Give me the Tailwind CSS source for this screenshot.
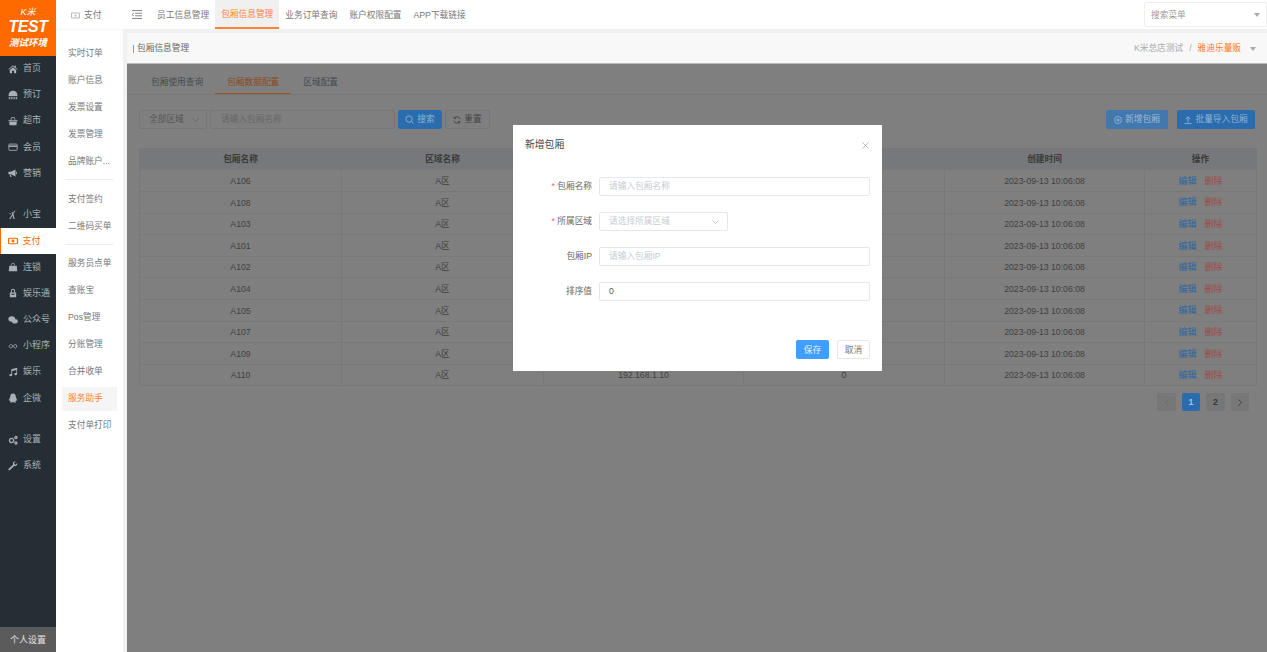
<!DOCTYPE html>
<html lang="zh-CN">
  <head>
    <meta charset="UTF-8" />
    <meta name="viewport" content="width=device-width, initial-scale=1.0" />
    <title>包厢信息管理</title>
    <script src="https://cdn.jsdelivr.net/npm/@tailwindcss/browser@4"></script>
  </head>
  <body class="w-[1267px] h-[652px] overflow-hidden flex bg-[#f0f0f0] text-[8.7px] leading-none text-[#666] [font-family:'Liberation_Sans','Noto_Sans_CJK_SC',sans-serif]">
    <!-- main nav -->
    <aside class="w-[56px] h-full shrink-0 flex flex-col bg-[#252e34] text-[#a9b1b6] text-[9px]">
      <div class="h-[55.500px] shrink-0 bg-[#ff6a00] text-white flex flex-col items-center font-bold italic">
        <span class="mt-[8px] text-[9px] font-normal leading-[9px]">K米</span>
        <span class="mt-[1px] text-[16px] leading-[17px] tracking-[-0.5px]">TEST</span>
        <span class="mt-[3px] text-[9.500px] leading-[10px]">测试环境</span>
      </div>
      <a class="h-[26.200px] flex items-center pl-[8px] gap-[5px]">
        <svg class="w-[10px] h-[10px]" viewBox="0 0 12 12" fill="currentColor"><path d="M6 1.500.5 6.300l.6.7L6 2.800 10.900 7l.6-.7-2-1.800V2H8v1.200zM2.200 7.200V11h2.600V8h2.400v3h2.600V7.200L6 4z"/></svg>
        <span>首页</span>
      </a>
      <a class="h-[26.200px] flex items-center pl-[8px] gap-[5px]">
        <svg class="w-[10px] h-[10px]" viewBox="0 0 12 12" fill="currentColor"><path d="M6 1C3 1 .7 3.200.7 6v1.200h10.600V6C11.300 3.200 9 1 6 1zM1 8h1.200v3H1zm2.200 0h1.300v3H3.200zm2.200 0h1.200v3H5.400zm2.100 0h1.300v3H7.500zm2.300 0H11v3H9.800z"/></svg>
        <span>预订</span>
      </a>
      <a class="h-[26.200px] flex items-center pl-[8px] gap-[5px]">
        <svg class="w-[10px] h-[10px]" viewBox="0 0 12 12" fill="currentColor"><path d="M3 5 4 1.500h4L9 5H8L7.300 2.500H4.700L4 5zM.5 5h11v1.300H.5zM1.300 7h9.400l-.6 4H1.900z"/></svg>
        <span>超市</span>
      </a>
      <a class="h-[26.200px] flex items-center pl-[8px] gap-[5px]">
        <svg class="w-[10px] h-[10px]" viewBox="0 0 12 12" fill="none" stroke="currentColor"><rect x="1" y="2.500" width="10" height="7.500" rx=".8"/><path d="M1 5h10" stroke-width="1.800"/></svg>
        <span>会员</span>
      </a>
      <a class="h-[26.200px] flex items-center pl-[8px] gap-[5px]">
        <svg class="w-[10px] h-[10px]" viewBox="0 0 12 12" fill="currentColor"><path d="M.5 4.500h3L9 1.800v8.400L3.500 7.500h-3zM2 8h1.500l.8 2.800H2.800zM9.800 4.200c1.500.2 1.500 3.400 0 3.600z"/></svg>
        <span>营销</span>
      </a>
      <a class="h-[26.200px] mt-[15.300px] flex items-center pl-[8px] gap-[5px]">
        <svg class="w-[10px] h-[10px]" viewBox="0 0 12 12" fill="currentColor"><path d="M8.800 1 6.500 4.600 8 10.800H6.600L5.500 6.500 3 10.800H1.500l3.600-6L4.500 2.500h1.200l.3 1L7.500 1zM2 3.500l1.800 1-.5.8-1.800-1z"/></svg>
        <span>小宝</span>
      </a>
      <a class="h-[26.200px] flex items-center pl-[6.500px] gap-[5px] bg-white text-[#ff6a00] border-l-[1.500px] border-[#ff6a00]">
        <svg class="w-[10px] h-[10px]" viewBox="0 0 12 12" fill="none" stroke="currentColor" stroke-width="1.400"><rect x=".7" y="2.700" width="10.600" height="6.600" rx=".8"/><circle cx="6" cy="6" r="1.700" fill="currentColor" stroke="none"/></svg>
        <span>支付</span>
      </a>
      <a class="h-[26.200px] flex items-center pl-[8px] gap-[5px]">
        <svg class="w-[10px] h-[10px]" viewBox="0 0 12 12" fill="currentColor"><path d="M4 4V3a2 2 0 0 1 4 0v1H7.200V3a1.200 1.200 0 0 0-2.400 0v1zM1.500 4.500h9l.6 6.500H.9z"/></svg>
        <span>连锁</span>
      </a>
      <a class="h-[26.200px] flex items-center pl-[8px] gap-[5px]">
        <svg class="w-[10px] h-[10px]" viewBox="0 0 12 12" fill="currentColor"><path d="M3.500 5V3.500a2.500 2.500 0 0 1 5 0V5H7.300V3.500a1.300 1.300 0 0 0-2.600 0V5zM2.200 5.500h7.600V11H2.200zM4 7v1h4V7z"/></svg>
        <span>娱乐通</span>
      </a>
      <a class="h-[26.200px] flex items-center pl-[8px] gap-[5px]">
        <svg class="w-[10px] h-[10px]" viewBox="0 0 12 12" fill="currentColor"><ellipse cx="4.500" cy="4.700" rx="4" ry="3.300"/><ellipse cx="8.200" cy="7.500" rx="3.500" ry="2.800"/></svg>
        <span>公众号</span>
      </a>
      <a class="h-[26.200px] flex items-center pl-[8px] gap-[5px]">
        <svg class="w-[10px] h-[10px]" viewBox="0 0 12 12" fill="none" stroke="currentColor"><path d="M6 6.500C5 4.500 3.800 4 2.800 4.500 1 5.300 1 8 3 8.300 5 8.500 7 4 9 4.300c2 .3 2 3.400.2 3.900C7.800 8.500 6.800 7.500 6 6.500z"/></svg>
        <span>小程序</span>
      </a>
      <a class="h-[26.200px] flex items-center pl-[8px] gap-[5px]">
        <svg class="w-[10px] h-[10px]" viewBox="0 0 12 12" fill="currentColor"><path d="M4 2.700 11 1v7.500a1.700 1.300 0 1 1-1-1.200V3.500L5 4.700v5a1.700 1.300 0 1 1-1-1.200z"/></svg>
        <span>娱乐</span>
      </a>
      <a class="h-[26.200px] flex items-center pl-[8px] gap-[5px]">
        <svg class="w-[10px] h-[10px]" viewBox="0 0 12 12" fill="currentColor"><path d="M6 .7c2.200 0 3.300 1.600 3.300 3.500 0 1 1.500 2.800 1.500 4.500 0 1-.7.800-1.200 0 0 .8-.4 1.200-.7 1.500.5.300.8.500.8.800 0 .4-1.800.4-2.700 0H5c-.9.400-2.700.4-2.700 0 0-.3.300-.5.800-.8-.3-.3-.7-.7-.7-1.500-.5.800-1.200 1-1.200 0 0-1.700 1.500-3.500 1.500-4.500C2.700 2.300 3.800.7 6 .7z"/></svg>
        <span>企微</span>
      </a>
      <a class="h-[26.200px] mt-[15.300px] flex items-center pl-[8px] gap-[5px]">
        <svg class="w-[10px] h-[10px]" viewBox="0 0 12 12" fill="none" stroke="currentColor" stroke-width="1.500"><circle cx="4.300" cy="6.500" r="2.500"/><circle cx="9.500" cy="3" r="1.300"/><circle cx="9.500" cy="9.500" r="1.300"/></svg>
        <span>设置</span>
      </a>
      <a class="h-[26.200px] flex items-center pl-[8px] gap-[5px]">
        <svg class="w-[10px] h-[10px]" viewBox="0 0 12 12" fill="currentColor"><path d="M11 2.500 9 4.400 7.600 4l-.4-1.400L9.200.8C7.500.2 5.600 1.500 5.800 3.600c0 .3.100.6.200.8L.8 9.200c-.5.500-.4 1.200 0 1.600.4.500 1.200.5 1.600 0L7.300 6c2.200.8 4.500-1.200 3.700-3.500z"/></svg>
        <span>系统</span>
      </a>
      <div class="mt-auto h-[25px] pt-[2px] bg-[#5b5b5b] text-[#e4e4e4] flex items-center justify-center">个人设置</div>
    </aside>

    <!-- sub nav -->
    <nav class="w-[67px] h-full shrink-0 bg-white text-[#777]">
      <div class="h-[29px] flex items-center gap-[4px] pl-[15px] pt-[1px] shadow-[0_1px_2px_rgba(0,0,0,0.05)]">
        <svg class="w-[9px] h-[9px] text-[#bbb]" viewBox="0 0 12 12" fill="none" stroke="currentColor" stroke-width="1.400"><rect x=".7" y="2.700" width="10.600" height="6.600" rx=".8"/><circle cx="6" cy="6" r="1.500" fill="currentColor" stroke="none"/></svg>
        <span>支付</span>
      </div>
      <ul class="pt-[11px] px-[6px]">
        <li class="h-[27px] flex items-center pl-[6px]">实时订单</li>
        <li class="h-[27px] flex items-center pl-[6px]">账户信息</li>
        <li class="h-[27px] flex items-center pl-[6px]">发票设置</li>
        <li class="h-[27px] flex items-center pl-[6px]">发票管理</li>
        <li class="h-[27px] flex items-center pl-[6px]">品牌账户...</li>
        <li class="h-[5px] mb-[5.500px] mx-[3px] border-b border-[#eee]"></li>
        <li class="h-[27px] flex items-center pl-[6px]">支付签约</li>
        <li class="h-[27px] flex items-center pl-[6px]">二维码买单</li>
        <li class="h-[5px] mb-[5.500px] mx-[3px] border-b border-[#eee]"></li>
        <li class="h-[27px] flex items-center pl-[6px]">服务员点单</li>
        <li class="h-[27px] flex items-center pl-[6px]">查账宝</li>
        <li class="h-[27px] flex items-center pl-[6px]">Pos管理</li>
        <li class="h-[27px] flex items-center pl-[6px]">分账管理</li>
        <li class="h-[27px] flex items-center pl-[6px]">合并收单</li>
        <li class="h-[24px] my-[1.500px] flex items-center pl-[6px] bg-[#f5f5f5] text-[#ff8133] rounded-[1px]">服务助手</li>
        <li class="h-[27px] flex items-center pl-[6px]">支付单打印</li>
      </ul>
    </nav>

    <div class="flex-1 h-full flex flex-col min-w-0">
      <!-- top tabs -->
      <header class="h-[29px] shrink-0 bg-white flex items-stretch text-[#777]">
        <div class="w-[28px] flex items-center pl-[9px]">
          <svg class="w-[10px] h-[9px]" viewBox="0 0 10 9" fill="none" stroke="#888" stroke-width="1"><path d="M0 .5h10M3 3.200h7M3 5.800h7M0 8.500h10M1.800 3 0 4.500 1.800 6"/></svg>
        </div>
        <a class="px-[6px] pt-[2px] flex items-center">员工信息管理</a>
        <a class="px-[6px] pt-[2px] flex items-center bg-[#f0f0f0] text-[#ff8133] border-b-2 border-[#ff8133]">包厢信息管理</a>
        <a class="px-[6px] pt-[2px] flex items-center">业务订单查询</a>
        <a class="px-[6px] pt-[2px] flex items-center">账户权限配置</a>
        <a class="px-[6px] pt-[2px] flex items-center">APP下载链接</a>
        <div class="ml-auto my-[2px] w-[123px] border border-[#eee] rounded-l-[2px] flex items-center justify-between pl-[6px] pr-[6px] pt-[1px] text-[#999]">
          <span>搜索菜单</span>
          <span class="w-0 h-0 border-x-[3.500px] border-x-transparent border-t-[4px] border-t-[#aaa]"></span>
        </div>
      </header>

      <div class="flex-1 pt-[4px] pl-[4px] min-h-0 flex flex-col">
        <!-- breadcrumb -->
        <div class="h-[30.500px] shrink-0 pt-[2px] bg-[#f8f8f8] border-b border-[#bbb] flex items-center pl-[6px] pr-[11px]">
          <span class="w-[1px] h-[8px] bg-[#ff8133] mr-[3px]"></span>
          <span>包厢信息管理</span>
          <span class="ml-auto text-[#aaa]">K米总店测试</span>
          <span class="mx-[6px] text-[#aaa]">/</span>
          <span class="text-[#ff7a1a]">雅迪乐量贩</span>
          <span class="ml-[9px] w-0 h-0 border-x-[3.500px] border-x-transparent border-t-[4px] border-t-[#aaa]"></span>
        </div>

        <!-- dimmed page under the dialog -->
        <main class="relative flex-1 min-h-0 bg-[#7f7f7f] text-[#3e3e3e]">
          <div class="h-[31px] flex border-b border-[#767676] pl-[12px] text-[#454a50]">
            <a class="px-[12px] pt-[8px] flex items-center">包厢使用查询</a>
            <a class="px-[12px] pt-[8px] flex items-center text-[#8a4a1c] border-b border-[#a3521c]">包厢数据配置</a>
            <a class="px-[12px] pt-[8px] flex items-center">区域配置</a>
          </div>

          <div class="flex px-[12px] mt-[15px] h-[19px] items-stretch">
            <div class="w-[68px] pt-[1px] border border-[#767676] rounded-[2px] flex items-center justify-between pl-[9px] pr-[7px] text-[#555]">
              <span>全部区域</span>
              <svg class="w-[7px] h-[4px]" viewBox="0 0 7 4" fill="none" stroke="#5f5f5f" stroke-width=".8"><path d="m.5.500 3 3 3-3"/></svg>
            </div>
            <div class="w-[185px] pt-[1px] ml-[3px] border border-[#767676] rounded-[2px] flex items-center pl-[10px] text-[#676767]">请输入包厢名称</div>
            <button class="w-[44px] pt-[1px] ml-[3px] bg-[#2a6cae] rounded-[2px] flex items-center justify-center gap-[3px] text-[#8fb2d4]">
              <svg class="w-[9px] h-[9px]" viewBox="0 0 10 10" fill="none" stroke="currentColor"><circle cx="4.500" cy="4.500" r="3.500"/><path d="m7 7 2.500 2.500"/></svg>
              <span>搜索</span>
            </button>
            <button class="w-[45px] pt-[1px] ml-[3px] border border-[#767676] rounded-[2px] flex items-center justify-center gap-[3px] text-[#454545]">
              <svg class="w-[8px] h-[8px]" viewBox="0 0 10 10" fill="none" stroke="currentColor" stroke-width="1.200"><path d="M8.800 4A4 4 0 0 0 1.500 3M1.200 6A4 4 0 0 0 8.500 7M1.500.8V3h2.200M8.500 9.200V7H6.300"/></svg>
              <span>重置</span>
            </button>
            <button class="ml-auto w-[62px] pt-[1px] bg-[#4278ad] rounded-[2px] flex items-center justify-center gap-[3px] text-[#9dbbd8]">
              <svg class="w-[8px] h-[8px]" viewBox="0 0 10 10" fill="none" stroke="currentColor"><circle cx="5" cy="5" r="4.400"/><path d="M5 2.500v5M2.500 5h5"/></svg>
              <span>新增包厢</span>
            </button>
            <button class="ml-[9px] w-[78px] pt-[1px] bg-[#2a6cae] rounded-[2px] flex items-center justify-center gap-[3px] text-[#8fb2d4]">
              <svg class="w-[8px] h-[8px]" viewBox="0 0 10 10" fill="none" stroke="currentColor" stroke-width="1.200"><path d="M5 8V1.500M2 4l3-3 3 3M.5 9.500h9"/></svg>
              <span>批量导入包厢</span>
            </button>
          </div>

          <table class="ml-[12px] mt-[19.500px] w-[1117px] table-fixed border-collapse text-center text-[#3f3f3f]">
            <colgroup>
              <col class="w-[202px]" /><col class="w-[202px]" /><col class="w-[200px]" /><col class="w-[201px]" /><col class="w-[200px]" /><col class="w-[112px]" />
            </colgroup>
            <thead>
              <tr class="h-[22px] bg-[#76787b] font-bold text-[#3a3a3a]">
                <th class="border-x border-[#787878]">包厢名称</th>
                <th class="border-x border-[#787878]">区域名称</th>
                <th class="border-x border-[#787878]">包厢IP</th>
                <th class="border-x border-[#787878]">排序值</th>
                <th class="border-x border-[#787878]">创建时间</th>
                <th class="border-x border-[#787878]">操作</th>
              </tr>
            </thead>
            <tbody id="rows"></tbody>
          </table>

          <div class="flex justify-end gap-[6px] mt-[7px] pr-[18px] text-[#333] font-bold">
            <span class="w-[19px] h-[18px] bg-[#777] rounded-[2px] flex items-center justify-center">
              <svg class="w-[4px] h-[7px]" viewBox="0 0 4 7" fill="none" stroke="#666" stroke-width=".8"><path d="M3.500.500l-3 3 3 3"/></svg>
            </span>
            <span class="w-[18px] h-[18px] bg-[#2a6cae] text-[#a5c3e0] rounded-[2px] flex items-center justify-center">1</span>
            <span class="w-[19px] h-[18px] bg-[#777] rounded-[2px] flex items-center justify-center">2</span>
            <span class="w-[18px] h-[18px] bg-[#777] rounded-[2px] flex items-center justify-center">
              <svg class="w-[4px] h-[7px]" viewBox="0 0 4 7" fill="none" stroke="#333" stroke-width=".8"><path d="m.5.500 3 3-3 3"/></svg>
            </span>
          </div>

          <!-- dialog -->
          <div class="absolute left-[386px] top-[61.500px] w-[369px] h-[246px] bg-white text-[#666] flex flex-col">
            <div class="flex items-center justify-between pl-[12px] pr-[13px] pt-[14px] h-[26px] text-[9.800px] text-[#444]">
              <span>新增包厢</span>
              <svg class="w-[7px] h-[7px]" viewBox="0 0 7 7" stroke="#999" stroke-width=".7"><path d="m.5.500 6 6M6.500.500l-6 6"/></svg>
            </div>
            <form class="mt-[26px] flex flex-col gap-[16.300px] pr-[12px]">
              <div class="flex items-center h-[18.700px]">
                <label class="w-[79px] pt-[1px] text-right"><span class="text-[#f56c6c]">* </span>包厢名称</label>
                <div class="ml-[7px] flex-1 h-full pt-[1px] border border-[#e4e7ed] rounded-[2px] flex items-center pl-[9px] text-[#c8ccd3]">请输入包厢名称</div>
              </div>
              <div class="flex items-center h-[18.700px]">
                <label class="w-[79px] pt-[1px] text-right"><span class="text-[#f56c6c]">* </span>所属区域</label>
                <div class="ml-[7px] w-[129px] h-full pt-[1px] border border-[#e4e7ed] rounded-[2px] flex items-center justify-between pl-[9px] pr-[8px] text-[#c8ccd3]">
                  <span>请选择所属区域</span>
                  <svg class="w-[7px] h-[4px]" viewBox="0 0 7 4" fill="none" stroke="#bbb" stroke-width=".8"><path d="m.5.500 3 3 3-3"/></svg>
                </div>
              </div>
              <div class="flex items-center h-[18.700px]">
                <label class="w-[79px] pt-[1px] text-right">包厢IP</label>
                <div class="ml-[7px] flex-1 h-full pt-[1px] border border-[#e4e7ed] rounded-[2px] flex items-center pl-[9px] text-[#c8ccd3]">请输入包厢IP</div>
              </div>
              <div class="flex items-center h-[18.700px]">
                <label class="w-[79px] pt-[1px] text-right">排序值</label>
                <div class="ml-[7px] flex-1 h-full pt-[1px] border border-[#e4e7ed] rounded-[2px] flex items-center pl-[9px] text-[#555]">0</div>
              </div>
            </form>
            <div class="mt-auto mb-[12px] flex justify-end gap-[8px] pr-[12px]">
              <button class="w-[33px] h-[19px] pt-[1px] bg-[#409eff] text-[#e8f3ff] rounded-[2px]">保存</button>
              <button class="w-[33px] h-[19px] pt-[1px] border border-[#e4e7ed] text-[#777] rounded-[2px]">取消</button>
            </div>
          </div>
        </main>
      </div>
    </div>

    <script>
      const names = ["A106", "A108", "A103", "A101", "A102", "A104", "A105", "A107", "A109", "A110"];
      // only the last row's IP and sort value stick out below the dialog
      document.getElementById("rows").innerHTML = names
        .map((name, i) => `
          <tr class="h-[21.600px] border-b border-[#787878]">
            <td class="border-x border-[#787878] pt-[1px]">${name}</td>
            <td class="border-x border-[#787878] pt-[1px]">A区</td>
            <td class="border-x border-[#787878] pt-[1px]">${i === 9 ? "192.168.1.10" : ""}</td>
            <td class="border-x border-[#787878] pt-[1px]">${i === 9 ? "0" : ""}</td>
            <td class="border-x border-[#787878] pt-[1px]">2023-09-13 10:06:08</td>
            <td class="border-x border-[#787878] pt-[1px] text-[9px]">
              <span class="text-[#2a66a2] mr-[8px]">编辑</span><span class="text-[#a04a4a]">删除</span>
            </td>
          </tr>`)
        .join("");
    </script>
  </body>
</html>
